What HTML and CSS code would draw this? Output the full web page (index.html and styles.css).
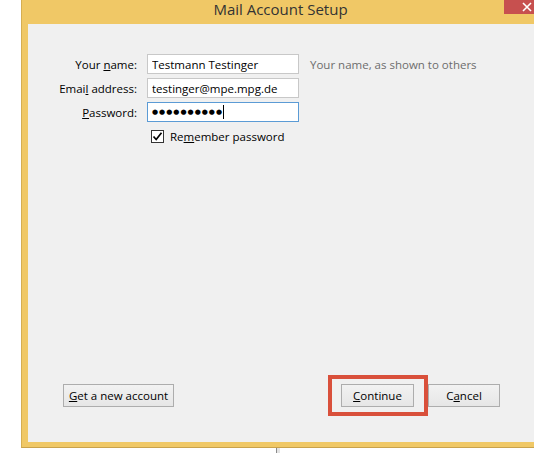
FILE: index.html
```html
<!DOCTYPE html>
<html lang="en">
<head>
    <meta charset="UTF-8">
    <title>Mail Account Setup</title>
    <link rel="stylesheet" href="styles.css">
</head>
<body>
    <div class="window">
        <div class="titlebar">
            <span class="title">Mail Account Setup</span>
            <button class="close" title="Close">
                <svg width="10" height="10" viewBox="0 0 10 10"><path d="M1 1L9 9M9 1L1 9" stroke="#fff" stroke-width="1.6"/></svg>
            </button>
        </div>
        <div class="panel">
            <div class="form">
                <label for="name">Your <u>n</u>ame:</label>
                <input type="text" id="name" value="Testmann Testinger">
                <span class="hint">Your name, as shown to others</span>

                <label for="email">Emai<u>l</u> address:</label>
                <input type="text" id="email" value="testinger@mpe.mpg.de">
                <span></span>

                <label for="password"><u>P</u>assword:</label>
                <div class="input focused"><span class="dots">●●●●●●●●●●</span><span class="caret"></span></div>
                <span></span>

                <span></span>
                <label class="check"><span class="box"><svg width="11" height="11" viewBox="0 0 11 11"><path d="M1.5 5.5L4.2 8.5L9.5 1.8" fill="none" stroke="#000" stroke-width="1.7"/></svg></span><span>Re<u>m</u>ember password</span></label>
                <span></span>
            </div>

            <div class="buttons">
                <button class="btn new"><u>G</u>et a new account</button>
                <div class="spacer"></div>
                <div class="highlight">
                    <button class="btn"><u>C</u>ontinue</button>
                </div>
                <button class="btn cancel">C<u>a</u>ncel</button>
            </div>
        </div>
    </div>
    <div class="below">
        <div class="edge"></div>
    </div>
</body>
</html>
```

FILE: styles.css
```css
html, body {
    margin: 0;
    padding: 0;
    overflow: hidden;
    background: #ffffff;
    font-family: "Open Sans", "Noto Sans", sans-serif;
    font-size: 11.5px;
    color: #000;
}
.window {
    margin-left: 21px;
    width: 530px;
    height: 448px;
    box-sizing: border-box;
    background: #f0c866;
    border-left: 1px solid #d6ae52;
    border-bottom: 1px solid #c9a24c;
    display: flex;
    flex-direction: column;
}
.titlebar {
    height: 24px;
    display: flex;
    align-items: flex-start;
    position: relative;
}
.title {
    flex: 1;
    text-align: center;
    font-size: 15px;
    line-height: 19px;
    color: #333;
    margin-right: 12px;
}
.close {
    position: absolute;
    left: 482px;
    top: 0;
    width: 46px;
    height: 14px;
    border: none;
    padding: 0;
    background: #c7504f;
    display: flex;
    align-items: center;
    justify-content: center;
}
.panel {
    flex: 1;
    margin: 0 0 5px 6px;
    background: #f0f0f0;
    display: flex;
    flex-direction: column;
    padding: 30px 0 0 0;
}
.form {
    display: grid;
    grid-template-columns: 109px 152px auto;
    column-gap: 10px;
    row-gap: 4px;
    align-items: center;
}
.form > label {
    text-align: right;
}
input, .input {
    height: 20px;
    box-sizing: border-box;
    border: 1px solid #c8c8c8;
    background: #fff;
    padding: 0 4px;
    font-family: inherit;
    font-size: 11.5px;
    color: #000;
    outline: none;
    margin: 0;
    width: 152px;
}
.input {
    display: flex;
    align-items: center;
}
.focused {
    border-color: #5b9bd5;
}
.dots {
    font-family: "DejaVu Sans", sans-serif;
    font-size: 7px;
    letter-spacing: 1px;
}
.caret {
    width: 1px;
    height: 14px;
    background: #000;
    margin-left: 0;
}
.hint {
    color: #6d6d6d;
    padding-left: 1px;
}
.form .check {
    display: flex;
    align-items: center;
    gap: 6px;
    margin-top: 3px;
    padding-left: 4px;
    text-align: left;
    white-space: nowrap;
}
.box {
    width: 11px;
    height: 11px;
    border: 1px solid #333;
    background: #fff;
    display: flex;
}
.buttons {
    margin-top: auto;
    margin-bottom: 26px;
    display: flex;
    align-items: center;
    padding: 0 0 0 35px;
}
.spacer {
    flex: 1;
}
.btn {
    height: 23px;
    box-sizing: border-box;
    border: 1px solid #adadad;
    background: linear-gradient(#f2f2f2, #e6e6e6);
    font-family: inherit;
    font-size: 11.5px;
    color: #000;
    padding: 0 4px;
    white-space: nowrap;
}
.new {
    width: 111px;
}
.highlight {
    border: 4px solid #d9503b;
    padding: 5px 10px 5px 9px;
}
.highlight .btn {
    width: 73px;
}
.cancel {
    width: 72px;
    margin-right: 51px;
}
.below {
    display: flex;
    height: 5px;
}
.edge {
    margin-left: 276px;
    width: 3px;
    height: 5px;
    background: #e4e4e4;
    border-left: 1px solid #8a8a8a;
}
```
